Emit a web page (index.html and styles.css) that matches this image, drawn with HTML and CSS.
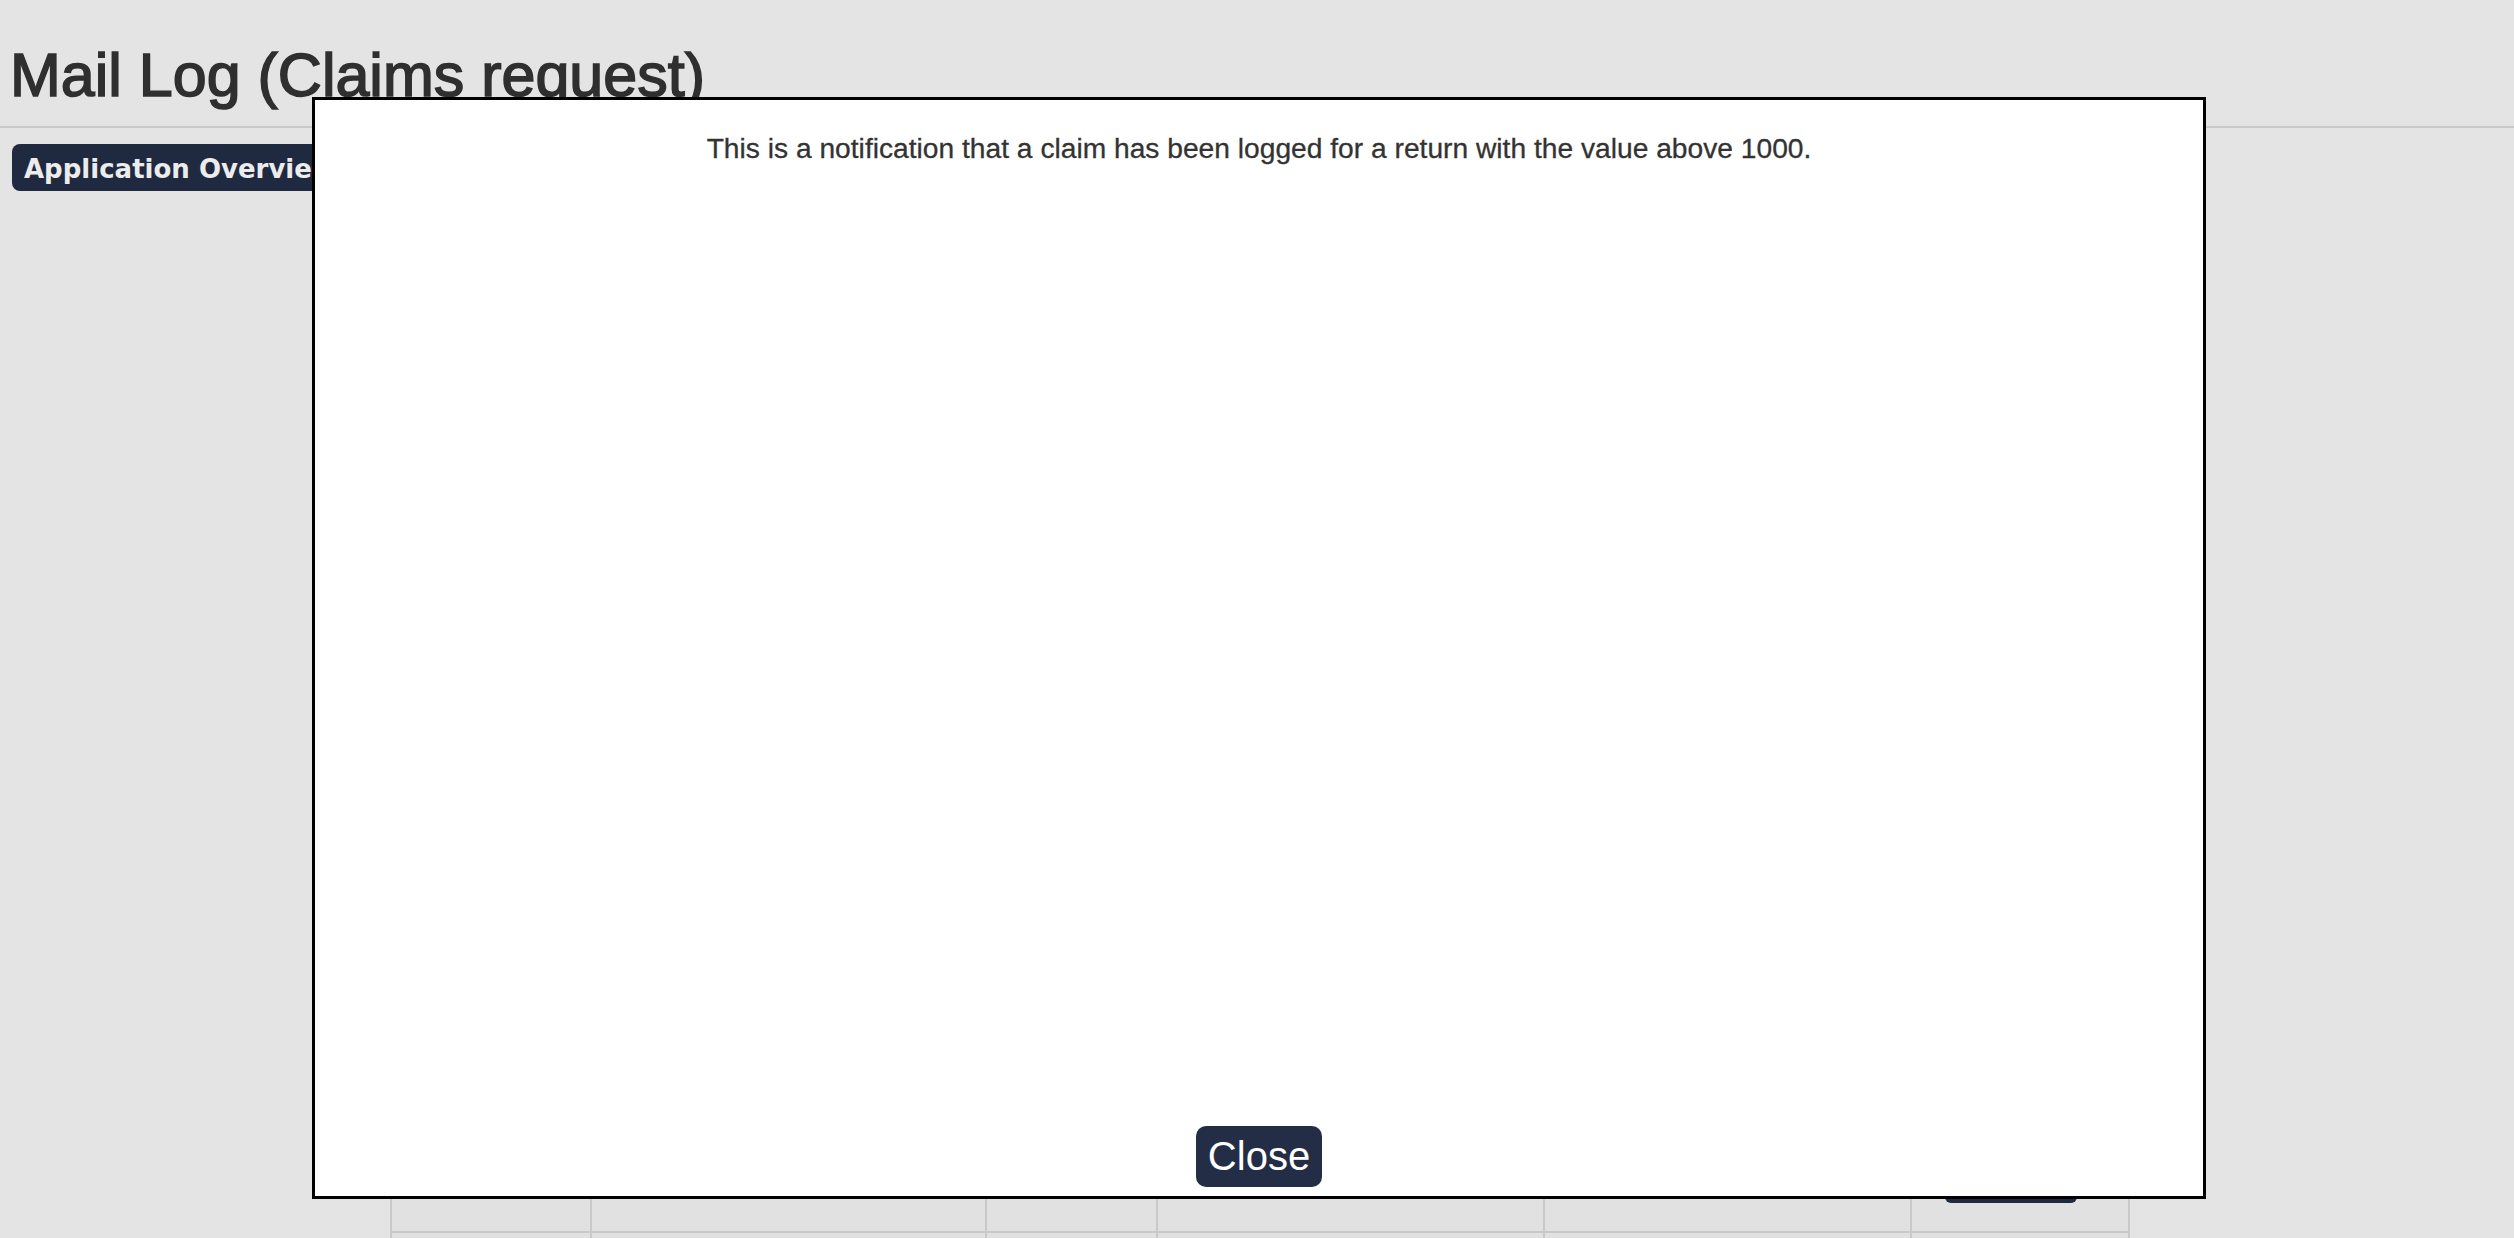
FILE: index.html
```html
<!DOCTYPE html>
<html lang="en">
<head>
<meta charset="utf-8">
<title>Mail Log (Claims request)</title>
<link rel="stylesheet" href="styles.css">
</head>
<body>
<header class="page-header">
  <h1 class="page-title">Mail Log (Claims request)</h1>
</header>
<main class="page-main">
  <div class="toolbar">
    <button class="btn-overview" type="button">Application Overview</button>
  </div>
  <table class="log-table">
    <colgroup>
      <col class="c1"><col class="c2"><col class="c3"><col class="c4"><col class="c5"><col class="c6">
    </colgroup>
    <tbody>
      <tr class="row-first">
        <td></td><td></td><td></td><td></td><td></td>
        <td class="cell-action"><button class="btn-view" type="button">View</button></td>
      </tr>
      <tr class="row-next">
        <td></td><td></td><td></td><td></td><td></td><td></td>
      </tr>
    </tbody>
  </table>
</main>

<div class="modal">
  <p class="modal-text">This is a notification that a claim has been logged for a return with the value above 1000.</p>
  <button class="btn-close" type="button">Close</button>
</div>
</body>
</html>
```

FILE: styles.css
```css
html, body {
  margin: 0;
  padding: 0;
}

body {
  background: #e4e4e4;
  font-family: "Liberation Sans", Arial, Helvetica, sans-serif;
  color: #333333;
  height: 1238px;
  overflow: hidden;
}

.page-header {
  padding: 40px 10px 0 10px;
  border-bottom: 2px solid #c9c9c9;
  height: 128px;
  box-sizing: border-box;
}

.page-title {
  margin: 0;
  font-size: 61px;
  line-height: 70px;
  font-weight: 400;
  color: #2f2f2f;
  -webkit-text-stroke: 1.6px #2f2f2f;
  white-space: nowrap;
}

.page-main {
  padding: 16px 0 0 0;
}

.toolbar {
  padding-left: 12px;
  display: flex;
}

.btn-overview {
  font-family: "DejaVu Sans", Verdana, sans-serif;
  font-weight: 700;
  font-size: 26px;
  line-height: 44px;
  padding: 3px 12px 0 12px;
  height: 47px;
  box-sizing: border-box;
  background: #1f2940;
  color: #ececec;
  border: none;
  border-radius: 8px;
  white-space: nowrap;
}

.log-table {
  margin: 909px 0 0 390px;
  width: 1738px;
  table-layout: fixed;
  border-collapse: collapse;
}

.log-table td {
  border: 2px solid #c9c9c9;
  background: #e0e1e0;
  padding: 0;
}

.c1 { width: 200px; }
.c2 { width: 395px; }
.c3 { width: 171px; }
.c4 { width: 387px; }
.c5 { width: 367px; }
.c6 { width: 218px; }

.row-first td {
  height: 129px;
}

.row-next td {
  height: 60px;
}

.cell-action {
  vertical-align: top;
  text-align: center;
}

.btn-view {
  margin-top: 60px;
  width: 132px;
  height: 41px;
  background: #1f2940;
  color: #ffffff;
  border: none;
  border-radius: 6px;
  font-family: "Liberation Sans", Arial, sans-serif;
  font-size: 22px;
  transform: translateX(-9px);
}

.modal {
  position: fixed;
  left: 312px;
  top: 97px;
  width: 1894px;
  height: 1102px;
  box-sizing: border-box;
  border: 3px solid #000000;
  background: #ffffff;
  display: flex;
  flex-direction: column;
  align-items: center;
  justify-content: space-between;
}

.modal-text {
  margin: 32px 0 0 0;
  font-size: 28.2px;
  line-height: 32px;
  color: #333333;
  -webkit-text-stroke: 0.3px #333333;
  white-space: nowrap;
}

.btn-close {
  margin-bottom: 9px;
  height: 61px;
  padding: 0 12px;
  line-height: 61px;
  font-family: "Liberation Sans", Arial, sans-serif;
  font-size: 40px;
  color: #ffffff;
  background: #232d45;
  border: none;
  border-radius: 10px;
}
```
